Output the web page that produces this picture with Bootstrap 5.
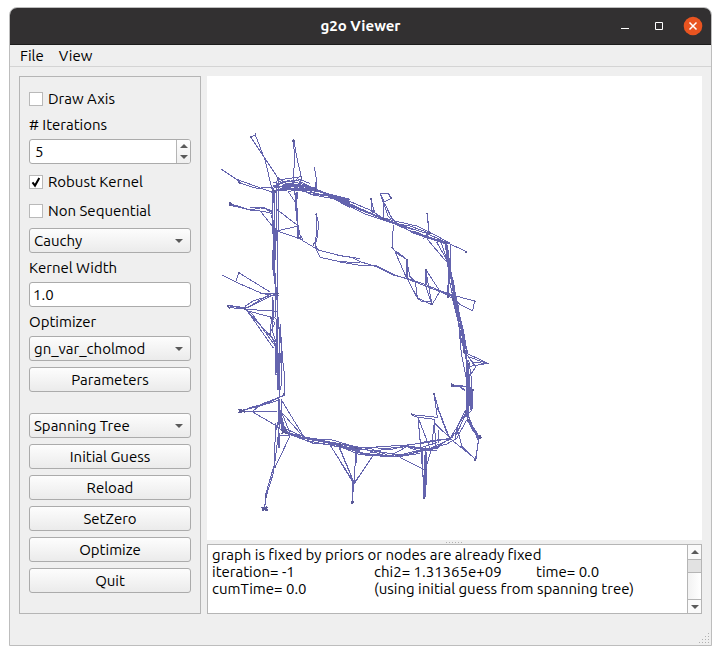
<!DOCTYPE html>
<html lang="en">
<head>
<meta charset="utf-8">
<meta name="viewport" content="width=device-width, initial-scale=1">
<title>g2o Viewer</title>
<link href="https://cdn.jsdelivr.net/npm/bootstrap@5.3.0/dist/css/bootstrap.min.css" rel="stylesheet">
<style>
  body { font-family: Ubuntu, "Noto Sans", sans-serif; font-size: 15px; line-height: 17px; color: #000; background: #fff; padding: 7px 9px 9px; }
  .app-window { background: #efefef; border: 1px solid #bdbdbd; border-radius: 8px 8px 0 0; overflow: hidden; }
  .title-bar { display: grid; grid-template-columns: 1fr auto 1fr; background: #323031; border-bottom: 1px solid #1c1c1c; color: #fff; height: 37px; }
  .title-bar h1 { font-size: 15px; line-height: 18px; font-weight: 700; }
  .title-bar button { width: 20px; height: 20px; background: none; line-height: 0; }
  .title-keys { gap: 13px; }
  .menu-bar { border-bottom: 1px solid #d4d4d4; height: 22px; padding: 0 10px; gap: 15px; }
  .menu-bar a { color: #000; text-decoration: none; }
  .work { padding: 9px 9px 31px; gap: 6px; }
  .side { flex: 0 0 182px; border: 1px solid #b5b5b5; padding: 10px 9px; gap: 6px; }
  .side label { line-height: 17px; }
  .tick-row { height: 23px; gap: 5px; }
  .side .form-check-input { width: 14px; height: 14px; margin: 0; border: 1px solid #b9b9b9; border-radius: 0; background-color: #fff; box-shadow: none; }
  .side .form-check-input:checked { background-color: #fff; border-color: #b9b9b9; background-size: 12px 12px;
    background-image: url("data:image/svg+xml,%3Csvg xmlns='http://www.w3.org/2000/svg' viewBox='0 0 12 12'%3E%3Cpath d='M2.5 6.3 5 9.6 9.3 2' fill='none' stroke='%23000' stroke-width='2'/%3E%3C/svg%3E"); }
  .side .form-control, .side .form-select, .side .btn { height: 25px; padding: 0 4px; font-size: 15px; line-height: 17px; color: #000; border: 1px solid #ababab; border-radius: 3px; box-shadow: none; }
  .side .form-control { padding: 0 3px; }
  .side .btn { background: linear-gradient(#fdfdfd, #ebebeb); }
  .side .form-select { background: url("data:image/svg+xml,%3Csvg xmlns='http://www.w3.org/2000/svg' viewBox='0 0 8 4'%3E%3Cpath d='M0 0h8L4 4z' fill='%235a5a5a'/%3E%3C/svg%3E") no-repeat right 7px center / 8px 4px, linear-gradient(#fdfdfd, #ebebeb); }
  .side .second { margin-top: 15px; }
  .spin { border: 1px solid #ababab; border-radius: 3px; background: #fff; height: 25px; overflow: hidden; }
  .side .spin input { border: 0; height: 23px; padding: 0 5px; appearance: textfield; -moz-appearance: textfield; background: none; }
  .spin input::-webkit-inner-spin-button { display: none; }
  .spin-keys { flex: 0 0 14px; border-left: 1px solid #b5b5b5; background: linear-gradient(#fdfdfd, #efefef); }
  .spin-keys button, .scroller button { border: 0; padding: 0; background: none; line-height: 0; display: flex; align-items: center; justify-content: center; flex: 1; }
  .view { min-width: 0; }
  .canvas { background: #fff; min-height: 0; }
  .canvas svg { width: 100%; height: 100%; }
  .graph { fill: none; stroke: #6464ae; stroke-width: 3; stroke-linejoin: round; }
  .graph .bold { stroke-width: 5; }
  .graph .node { stroke: #5a5a98; stroke-width: 5; }
  .handle { height: 4px; line-height: 0; }
  .log { height: 70px; border: 1px solid #b5b5b5; background: #fff; }
  .log textarea { border: 0; resize: none; outline: 0; padding: 1px 4px 0; overflow: hidden; line-height: 17px; color: #000; tab-size: 162px; min-width: 0; }
  .scroller { flex: 0 0 14px; border-left: 1px solid #b5b5b5; background: linear-gradient(90deg, #f2f2f2, #fff); }
  .scroller button { flex: 0 0 14px; background: #fafafa; }
  .thumb { height: 14px; background: #e2e2e2; border: solid #b5b5b5; border-width: 1px 0; }
  .scroller button:last-child { border-top: 1px solid #b5b5b5; margin-top: auto; }
  .grip { right: 1px; bottom: 1px; line-height: 0; }
</style>
</head>
<body class="d-flex flex-column min-vh-100">
<main class="app-window d-flex flex-column flex-grow-1 position-relative">
  <header class="title-bar align-items-center">
    <span></span>
    <h1 class="m-0">g2o Viewer</h1>
    <div class="title-keys d-flex justify-content-end align-items-center pe-2">
      <button class="border-0 p-0" aria-label="Minimize"><svg width="20" height="20"><path d="M4 12.500h8" stroke="#fff"/></svg></button>
      <button class="border-0 p-0" aria-label="Maximize"><svg width="20" height="20"><path d="M5.500 6.500h7v7h-7z" fill="none" stroke="#fff"/></svg></button>
      <button class="border-0 p-0" aria-label="Close"><svg width="20" height="20"><circle cx="10" cy="10" r="9.300" fill="#e95420"/><path d="m6.500 6.500 7 7m0-7-7 7" stroke="#fff" stroke-width="1.500"/></svg></button>
    </div>
  </header>
  <nav class="menu-bar d-flex align-items-center"><a href="#">File</a><a href="#">View</a></nav>

  <div class="work d-flex flex-grow-1">
    <form class="side d-flex flex-column">
      <div class="tick-row d-flex align-items-center"><input class="form-check-input" type="checkbox" id="axis"><label for="axis">Draw Axis</label></div>
      <label for="iter"># Iterations</label>
      <div class="spin d-flex">
        <input class="form-control" type="number" id="iter" value="5">
        <div class="spin-keys d-flex flex-column">
          <button type="button" aria-label="Increase"><svg width="8" height="4"><path d="M0 4h8L4 0z" fill="#5a5a5a"/></svg></button>
          <button type="button" aria-label="Decrease"><svg width="8" height="4"><path d="M0 0h8L4 4z" fill="#5a5a5a"/></svg></button>
        </div>
      </div>
      <div class="tick-row d-flex align-items-center"><input class="form-check-input" type="checkbox" id="robust" checked><label for="robust">Robust Kernel</label></div>
      <div class="tick-row d-flex align-items-center"><input class="form-check-input" type="checkbox" id="nonseq"><label for="nonseq">Non Sequential</label></div>
      <select class="form-select" aria-label="Kernel"><option>Cauchy</option></select>
      <label for="width">Kernel Width</label>
      <input class="form-control" type="text" id="width" value="1.0">
      <label for="opt">Optimizer</label>
      <select class="form-select" id="opt"><option>gn_var_cholmod</option></select>
      <button type="button" class="btn">Parameters</button>
      <select class="form-select second" aria-label="Initialization"><option>Spanning Tree</option></select>
      <button type="button" class="btn">Initial Guess</button>
      <button type="button" class="btn">Reload</button>
      <button type="button" class="btn">SetZero</button>
      <button type="button" class="btn">Optimize</button>
      <button type="button" class="btn">Quit</button>
    </form>

    <section class="view d-flex flex-column flex-grow-1">
      <div class="canvas flex-grow-1">
        <svg class="d-block" viewBox="0 0 1485 1392" role="img" aria-label="Pose graph" shape-rendering="crispEdges">
          <g class="graph">
            <!-- upper left corner -->
            <g transform="translate(9 132)">
              <path d="M135 42 165 120 188 215M123 52 200 168 206 192M123 52 137 44M250 60 254 110 250 180 262 270 265 350M252 64 262 120 275 175 268 190M313 142 318 170 318 215M34 148 80 178 140 200 190 218M80 178 92 190 140 205 200 200 260 192 320 205M60 252 85 258 120 270 160 262 190 275M62 256 120 270 160 274 190 282M120 264 140 262 165 266 188 278M153 276 200 335M200 268 265 318 200 333M200 333 265 354 325 390 390 407 450 416M318 280 326 310 322 350 315 380 330 412 390 425 450 428M318 280 318 350 314 370 326 392M265 320 270 345 278 358 262 354"/>
              <path d="M190 200 235 182 275 192 330 212 420 252M188 214 230 204 290 216 350 226 420 262M205 175 230 190 275 202 340 218 420 238M190 195 260 208 330 214 420 258M190 188 240 195 310 225 420 245M205 180 275 170 270 205 235 215 258 250M188 220 240 190 330 225 380 228M203 180 215 188 260 180 318 208M192 212 250 198 300 222 370 226 420 240M214 180 250 212 290 206M222 212 262 176 300 190"/>
              <path class="bold" d="M188 215 187 240M192 300 194 420M200 230 199 350M205 212 260 206 330 214 420 246M262 215 258 260 264 325M191 202 235 197 285 200 350 222M350 222 420 252M318 185 318 212"/>
              <path d="M184 285 192 320M206 170 203 420M198 180 202 420M190 205 188 300 191 420M194 215 196 420M254 215 263 290 264 355M188 200 187 300"/>
              <path class="node" d="M122 48v6M134 40h5M247 62h7M250 57v10M58 252h7M60 247v11M85 186l5 3M316 205v9M260 352h12M310 368v10M316 283h5M202 170v8M274 168v8M188 210l10 6"/>
            </g>
            <!-- upper right run and the inner loop -->
            <g transform="translate(399 282)">
              <path d="M0 88 60 118 130 148 200 172 260 190 320 218M0 94 70 130 160 160 250 200 320 222M0 82 90 120 130 145 230 168 280 192 330 220M20 102 80 128 160 152 220 190 320 216M93 88 96 120 104 128 92 125M93 90 104 128M121 72 145 69 153 86 133 96 121 72 131 100 130 148M133 98 152 138 170 162M131 100 145 140 160 150M261 130 264 160 268 190 248 200M262 132 268 192M160 165 158 200 156 232 170 250 200 268M165 245 200 325M200 268 203 328 232 384 276 404M200 270 210 320 226 336 232 384 245 394 276 396M257 300 276 404 300 364 258 300 256 345 276 404M0 257 36 262 60 275 110 290 160 315 210 328 260 345 300 362 340 375M0 276 60 286 110 287 170 317 215 332 300 365 350 382M340 376 404 393 398 422 360 404 335 375M316 220 330 222 380 245M262 208 320 276M290 216 326 280M300 205 330 300M330 222 330 300 325 370M300 364 340 386 354 410M168 244 180 252 198 266"/>
              <path class="bold" d="M0 89 50 112 110 138 160 158 220 178M220 184 260 200 316 218M130 110 130 148M317 220 326 280 338 350 354 410 358 448M344 370 350 430M200 270 202 320M257 302 258 345"/>
              <path d="M322 225 332 300 348 380 360 440M316 222 330 340 354 448M160 160 210 168 270 190 250 206M328 300 322 370 340 384"/>
              <path class="node" d="M91 87h5M151 84h5M258 130h6M376 245h6M154 232h6M198 268h5M254 300h6M274 402h5M402 394h5M127 147h7M266 188h6M313 217h7M324 376v9M338 383v9M230 384h5"/>
            </g>
            <!-- left side -->
            <g transform="translate(9 522)">
              <path d="M37 76 77 96 86 68 180 126M77 96 155 130 200 132M54 166 110 174 185 130M54 172 110 178 200 184M110 182 198 205M60 168 105 176 190 135M110 182 150 224 192 270M110 180 190 294M104 170 130 152 200 132M110 182 125 190 200 294M180 202 195 220 178 252 195 275M184 204 181 255 200 290M188 140 192 180 186 240 198 275M198 290 196 374 204 374"/>
              <path class="bold" d="M192 30 191 60 198 120 202 150M202 150 202 200M207 230 214 280 214 345M206 310 208 420"/>
              <path d="M188 0 188 60M202 0 203 420M192 0 196 90 200 130M196 120 198 200 200 370M210 220 218 330 223 370 223 420M208 290 216 370 212 420M189 150 187 220M204 200 210 260 206 330M150 130 190 136 207 135"/>
              <path class="node" d="M72 94h5M52 166l7 10M55 165v10M84 68h6M196 130h12M202 126v12M105 173v6M180 250v6M180 203h6"/>
            </g>
            <!-- lower left corner -->
            <g transform="translate(39 912)">
              <path d="M193 0 195 46 180 50M66 92 100 80 140 70 180 52M66 92 120 78 178 60M68 94 172 94M100 92 125 72 178 52M98 96 170 138 190 155M182 56 250 168 200 158M182 90 208 155M188 100 245 165M180 90 195 150M166 130 164 250 138 340 134 385M180 120 168 220 160 280 138 350 134 385M210 168 190 210 165 262M176 150 174 205M328 192 402 308M358 204 402 308 420 285M402 308 408 210M400 308 398 368M178 165 210 166M184 60 186 130 200 150"/>
              <path d="M195 152 240 172 300 180 350 190 420 205M200 160 260 182 330 195 420 215M200 148 250 170 330 186 420 202M235 172 280 190 350 195 420 212M250 176 330 178 370 190 420 206"/>
              <path class="bold" d="M178 0 178 55M176 55 177 120 168 150M180 95 186 150 205 160M200 158 250 174 325 188M325 188 380 202 420 210M408 210 407 250M397 335 397 368M178 160 176 205M186 120 194 158"/>
              <path class="node" d="M54 88 76 97M56 99 74 88M62 88v12M124 382 144 390M126 392 142 380M130 382v12M138 382v12M138 345v8M184 150 202 162M184 162 200 148M192 38v6M402 203h12M164 260h5M396 364v8M402 304v6"/>
            </g>
            <!-- lower edge and lower right corner -->
            <g transform="translate(399 912)">
              <path d="M0 196 60 210 100 202 150 210 200 195 260 188 330 175 378 98M0 202 80 210 130 225 180 230 250 210 320 192 350 175 380 120M0 200 60 224 150 230 220 220 270 205 330 178 352 150M50 204 130 200 190 195 240 204 290 188M80 222 140 205 200 200 240 214M60 206 180 225 240 210 290 212M90 205 150 228 200 200 270 212 340 170"/>
              <path d="M0 244 42 312 100 225M0 205 42 308M48 204 42 310M38 310 36 370M215 104 292 112 282 40 296 90 328 172M216 106 234 112 284 118 286 200M234 112 242 200 254 355M234 112 272 210M284 130 330 174M290 92 296 80M296 92 310 130 325 170M284 118 276 190M295 150 296 190M180 232 256 270 275 205M256 200 256 270M248 210 250 355M338 16 360 20 376 34M336 20 362 16 380 22M352 148 366 200 408 240M330 176 408 238 416 175 385 120M376 90 350 145 345 180M378 100 345 172M384 118 418 170 406 240M240 188 290 180 330 178"/>
              <path class="bold" d="M380 0 379 100M388 10 390 60 380 100M380 100 384 122 400 152 420 172M0 200 50 206M48 206 48 250M37 340 37 370M254 225 254 350M100 224 175 230M240 208 290 205 305 190M352 145 352 162M50 216 100 226"/>
              <path d="M398 30 396 90 376 110M378 0 378 110M386 0 388 60 384 110M260 215 259 315M376 92 382 100 398 140 414 180M175 230 240 220M200 226 256 206"/>
              <path class="node" d="M213 100l8 8M334 10v10M338 16h7M280 42h5M418 172h8M420 166v10M405 236v8M252 350v8M256 268h6M35 366h6M0 190v10M328 168v8M376 92v8M382 120h8M48 202v6M172 222v8"/>
            </g>
            <!-- right side -->
            <g transform="translate(579 612)">
              <path d="M200 220 264 250 204 260M205 230 264 252 212 245M205 230 228 260 208 290M155 314 180 320 195 330M155 320 210 318M198 220 215 245 228 262"/>
              <path class="bold" d="M156 10 165 60 180 120 192 200 204 260 205 390M168 70 184 140 202 220M199 300 200 390M212 320 214 390"/>
              <path d="M158 60 176 130 184 220 198 290M166 60 190 150 200 210M172 90 184 180 196 225M206 240 215 300 215 390M198 230 200 300M194 210 210 300 200 350 214 390M160 0 168 60"/>
              <path class="node" d="M260 250h6M154 310v10M158 314l4 6M206 250v6M192 210v8M218 326v8"/>
            </g>
          </g>
        </svg>
      </div>
      <div class="handle d-flex align-items-center justify-content-center"><svg width="17" height="2"><path d="M0 1h17" stroke="#b0b0b0" stroke-width="1" stroke-dasharray="1 2" shape-rendering="crispEdges"/></svg></div>
      <div class="log d-flex">
        <textarea class="flex-grow-1" readonly aria-label="Log">graph is fixed by priors or nodes are already fixed
iteration= -1	chi2= 1.31365e+09	time= 0.0
cumTime= 0.0	(using initial guess from spanning tree)</textarea>
        <div class="scroller d-flex flex-column">
          <button type="button" aria-label="Scroll up"><svg width="8" height="4"><path d="M0 4h8L4 0z" fill="#5a5a5a"/></svg></button>
          <div class="thumb"></div>
          <button type="button" aria-label="Scroll down"><svg width="8" height="4"><path d="M0 0h8L4 4z" fill="#5a5a5a"/></svg></button>
        </div>
      </div>
    </section>
  </div>
  <div class="grip position-absolute"><svg width="12" height="12" shape-rendering="crispEdges"><path d="M1 10h1m2 0h1m2 0h1m2 0h1M4 7h1m2 0h1m2 0h1M7 4h1m2 0h1M10 1h1" stroke="#b0b0b0"/></svg></div>
</main>
<script src="https://cdn.jsdelivr.net/npm/bootstrap@5.3.0/dist/js/bootstrap.bundle.min.js"></script>
</body>
</html>
